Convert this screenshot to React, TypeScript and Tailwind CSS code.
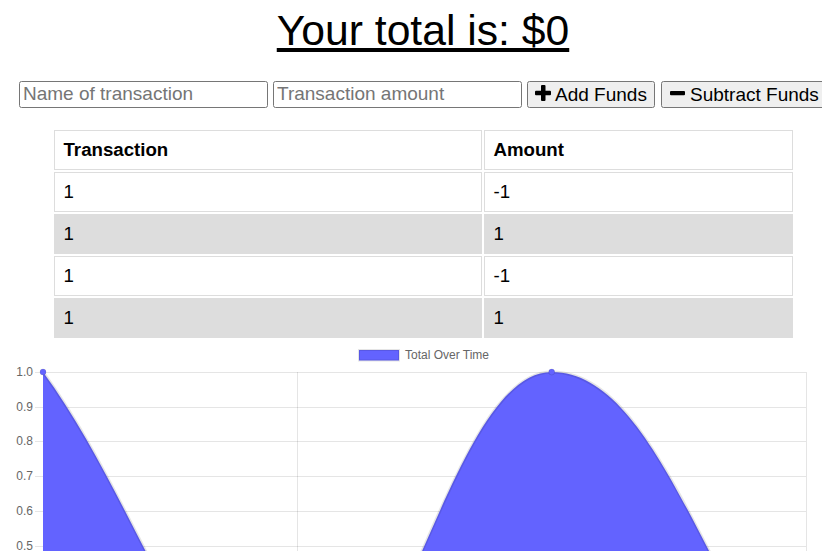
import React from "react";

const BLUE = "#6363ff";

function Chart() {
  const top = 340;
  const y = (v: number) => 719 - v * 347 - top;
  const xs = [43, 297.3, 551.7, 806];
  const grid = [1.0, 0.9, 0.8, 0.7, 0.6, 0.5, 0.4];
  const area = `M 43 ${372 - top} C 144.7 ${510.8 - top}, 195.6 ${719 - top}, 297.3 ${719 - top} C 399 ${719 - top}, 450 ${372 - top}, 551.7 ${372 - top} C 653.4 ${372 - top}, 704.3 ${580.2 - top}, 806 ${719 - top}`;
  return (
    <svg width={822} height={211} className="block mt-[2px]" style={{ fontFamily: "'Liberation Sans', Arial, sans-serif" }}>
      {grid.map((v) => (
        <line key={v} x1={35} x2={806} y1={Math.round(y(v)) + 0.5} y2={Math.round(y(v)) + 0.5} stroke="rgba(0,0,0,0.1)" strokeWidth={1} />
      ))}
      {xs.map((x) => (
        <line key={x} x1={Math.round(x) + 0.5} x2={Math.round(x) + 0.5} y1={372 - top} y2={211} stroke="rgba(0,0,0,0.1)" strokeWidth={1} />
      ))}
      {grid.map((v) => (
        <text key={"l" + v} x={33} y={y(v) + 4} textAnchor="end" fontSize={12} fill="#666">
          {v.toFixed(1)}
        </text>
      ))}
      <path d={`${area} L 806 ${719 - top} L 43 ${719 - top} Z`} fill={BLUE} />
      <path d={area} fill="none" stroke="rgba(0,0,0,0.1)" strokeWidth={3} />
      <circle cx={43} cy={372 - top} r={3} fill={BLUE} stroke="rgba(0,0,0,0.1)" strokeWidth={1} />
      <circle cx={551.7} cy={372 - top} r={3} fill={BLUE} stroke="rgba(0,0,0,0.1)" strokeWidth={1} />
      <rect x={359} y={10} width={40} height={10.5} fill={BLUE} stroke="rgba(0,0,0,0.1)" strokeWidth={2} />
      <text x={405} y={19} fontSize={12} fill="#666">
        Total Over Time
      </text>
    </svg>
  );
}

function PlusIcon() {
  return (
    <svg width="16" height="16" viewBox="0 0 16 16" className="block -mt-[3px]">
      <rect x="6" y="0" width="4.5" height="16" rx="1" fill="#000" />
      <rect x="0" y="5.8" width="16" height="4.5" rx="1" fill="#000" />
    </svg>
  );
}

function MinusIcon() {
  return (
    <svg width="15" height="16" viewBox="0 0 15 16" className="block -mt-[3px]">
      <rect x="0" y="6" width="15" height="4.2" rx="1" fill="#000" />
    </svg>
  );
}

export default function App() {
  const rows = [
    { t: "1", a: "-1" },
    { t: "1", a: "1" },
    { t: "1", a: "-1" },
    { t: "1", a: "1" },
  ];
  return (
    <div className="w-[822px] h-[551px] overflow-hidden bg-white text-black font-['Liberation_Sans',Arial,sans-serif]">
      <div className="w-[846px]">
        <h1 className="text-center text-[42.67px] leading-[49px] pt-[6px] underline font-normal">Your total is: $0</h1>
        <div className="flex justify-center items-center mt-[26px]">
          <input
            placeholder="Name of transaction"
            className="w-[249px] h-[27px] border border-[#767676] rounded-[2.5px] px-[3px] text-[19px] placeholder-[#757575] outline-none"
          />
          <input
            placeholder="Transaction amount"
            className="ml-[5px] w-[249px] h-[27px] border border-[#767676] rounded-[2.5px] px-[3px] text-[19px] placeholder-[#757575] outline-none"
          />
          <button className="ml-[5px] w-[128px] h-[27px] border border-[#767676] rounded-[2.5px] bg-[#efefef] text-[19px] flex items-center pl-[7px] gap-[4px] leading-none">
            <PlusIcon />
            <span>Add Funds</span>
          </button>
          <button className="ml-[6px] w-[166px] shrink-0 h-[27px] border border-[#767676] rounded-[2.5px] bg-[#efefef] text-[19px] flex items-center pl-[8px] gap-[5px] leading-none">
            <MinusIcon />
            <span>Subtract Funds</span>
          </button>
        </div>
        <div className="mt-[22px] mx-auto w-[739px] grid grid-cols-[428px_309px] gap-[2px] text-[18.67px]">
          <div className="h-[40px] border border-[#dddddd] px-[9px] flex items-center font-bold">Transaction</div>
          <div className="h-[40px] border border-[#dddddd] px-[9px] flex items-center font-bold">Amount</div>
          {rows.map((r, i) => (
            <React.Fragment key={i}>
              <div className={`h-[40px] border border-[#dddddd] px-[9px] flex items-center ${i % 2 === 1 ? "bg-[#dddddd]" : ""}`}>{r.t}</div>
              <div className={`h-[40px] border border-[#dddddd] px-[9px] flex items-center ${i % 2 === 1 ? "bg-[#dddddd]" : ""}`}>{r.a}</div>
            </React.Fragment>
          ))}
        </div>
        <Chart />
      </div>
    </div>
  );
}
